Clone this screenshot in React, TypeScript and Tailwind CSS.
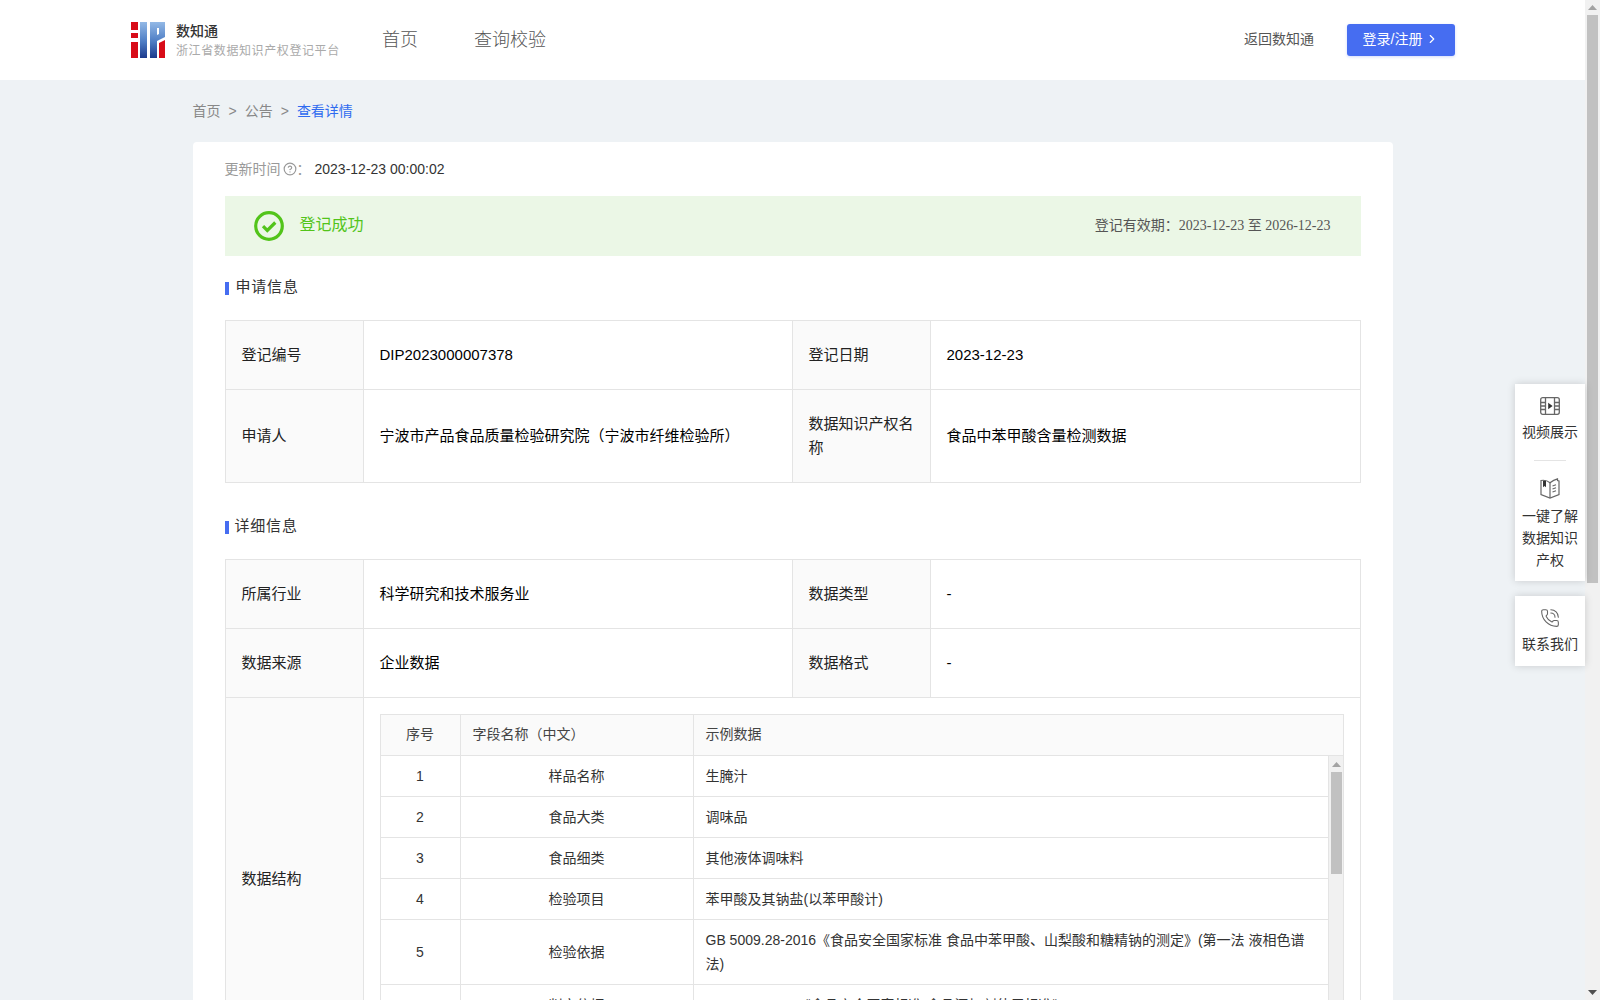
import { ChevronRight, CircleHelp, PhoneCall } from "lucide-react";

const fields = [
  { no: 1, name: "样品名称", sample: "生腌汁" },
  { no: 2, name: "食品大类", sample: "调味品" },
  { no: 3, name: "食品细类", sample: "其他液体调味料" },
  { no: 4, name: "检验项目", sample: "苯甲酸及其钠盐(以苯甲酸计)" },
  {
    no: 5,
    name: "检验依据",
    sample: "GB 5009.28-2016《食品安全国家标准 食品中苯甲酸、山梨酸和糖精钠的测定》(第一法 液相色谱法)",
  },
  { no: 6, name: "判定依据", sample: "GB 2760-2014《食品安全国家标准 食品添加剂使用标准》" },
  { no: 7, name: "计量单位", sample: "g/kg" },
];

const labelCell = "border border-[#e4e4e4] bg-[#fafafa] px-4 py-[22px] text-left align-middle text-[15px] font-normal text-[#222]";
const valueCell = "border border-[#e4e4e4] px-4 py-[22px] align-middle text-[15px] text-black";
const headCell = "border border-[#e4e4e4] bg-[#fafafa] px-3 pt-[7px] pb-[9px] text-left font-normal text-[#444]";
const bodyCell = "border border-[#e4e4e4] px-3 py-2 align-middle text-[#333]";

const Logo = () => (
  <svg width="34" height="36" viewBox="0 0 34 36">
    <defs>
      <linearGradient id="logoBlue" x1="0" y1="0" x2="0" y2="1">
        <stop offset="0" stopColor="#93b9e6" />
        <stop offset="0.55" stopColor="#4d7cc4" />
        <stop offset="1" stopColor="#1c3a8c" />
      </linearGradient>
    </defs>
    <path d="M0 0h7v8H0zM0 11h7v5H0zM0 20h7v16H0z" fill="#d80c18" />
    <path d="M9 0h7v36H9z" fill="url(#logoBlue)" />
    <path fillRule="evenodd" d="M19 0h15v15l-8 4v17h-7zM26 6v7l2-1V6z" fill="url(#logoBlue)" />
    <path d="M28 21l6-3v18h-6z" fill="#d80c18" />
  </svg>
);

const FilmIcon = () => (
  <svg width="20" height="18" viewBox="0 0 20 18" fill="none" stroke="#666" strokeWidth="1.3">
    <rect x="0.7" y="0.7" width="18.6" height="16.6" rx="2" />
    <path d="M5.5 1v16M14.5 1v16M1 5.5h4.5M1 9h4.5M1 12.5h4.5M14.5 5.5H19M14.5 9H19M14.5 12.5H19" />
    <path d="M8.2 5.8l4.4 3.2-4.4 3.2z" fill="#333" stroke="none" />
  </svg>
);

const BookIcon = () => (
  <svg width="20" height="21" viewBox="0 0 20 21" fill="none" stroke="#666" strokeWidth="1.2">
    <path d="M1 2.5c3-.6 6.300 0 9 2.300 2.400-2 4.800-3.300 7.500-4v1.800L19 3v13.500L10 20 1 16.500z" />
    <path d="M10 4.800V20M12.500 8l3.500-1.200M12.500 11l3.500-1.200M12.500 14l3.500-1.200" />
    <path d="M3 2.800h3v6.500L4.500 8 3 9.300z" fill="#333" stroke="none" />
  </svg>
);

const SectionTitle = ({ title, gap }: { title: string; gap: string }) => (
  <div className={`mb-5 flex h-6 items-center ${gap}`}>
    <span className="h-[13px] w-1 bg-[#466df1]" />
    <span className="pb-[2px] text-[15px] tracking-[0.8px] text-[#333]">{title}</span>
  </div>
);

export default function App() {
  return (
    <div
      className="flex h-screen overflow-hidden bg-[#eef2f5] text-sm text-[#333]"
      style={{ fontFamily: '"Liberation Sans", "Noto Sans CJK SC", sans-serif' }}
    >
      <div className="relative min-w-0 flex-1">
        <header className="flex h-20 items-center bg-white pl-[131px] pr-[130px]">
          <Logo />
          <div className="ml-[11px] w-[206px]">
            <div className="text-sm leading-[18px] font-medium text-[#333]">数知通</div>
            <div className="mt-[3px] text-xs leading-[16px] tracking-[0.6px] text-[#aaa]">
              浙江省数据知识产权登记平台
            </div>
          </div>
          <nav className="flex gap-[56px] text-lg font-light text-[#555]">
            <a>首页</a>
            <a>查询校验</a>
          </nav>
          <a className="ml-auto pb-[2px] text-sm text-[#555]">返回数知通</a>
          <button className="ml-[33px] flex h-8 w-[108px] items-center justify-center gap-[3px] rounded-[3px] bg-[#466df1] pb-[2px] text-sm text-white shadow-[0_1px_3px_rgba(70,109,241,.25)]">
            登录/注册
            <ChevronRight size={14} />
          </button>
        </header>

        <main className="mx-auto w-[1200px]">
          <div className="flex h-[62px] items-center gap-2 pb-[1px] text-sm text-[#888]">
            <span>首页</span>
            <span>&gt;</span>
            <span>公告</span>
            <span>&gt;</span>
            <span className="text-[#2f6bf0]">查看详情</span>
          </div>

          <div className="rounded-t bg-white px-8 pt-[15px]">
            <div className="mb-[15px] flex h-6 items-center text-sm">
              <span className="text-[#999]">更新时间</span>
              <CircleHelp size={14} className="ml-[2px] text-[#999]" />
              <span className="w-[18px] text-[#999]">：</span>
              <span className="text-[#333]">2023-12-23 00:00:02</span>
            </div>

            <div className="flex h-[60px] items-center bg-[#ebf7e6] pl-[29px] pr-[30px]">
              <svg width="30" height="30" viewBox="0 0 30 30" fill="none" stroke="#52c41a">
                <circle cx="15" cy="15" r="13.300" strokeWidth="3.200" />
                <path d="M9 15.200l4.300 4.300 8-8" strokeWidth="3.200" />
              </svg>
              <span className="ml-4 pb-[2px] text-base text-[#52c41a]">登记成功</span>
              <span className="ml-auto pb-[2px] text-sm text-[#555]">
                登记有效期：
                <span style={{ fontFamily: '"Liberation Serif", "Noto Sans CJK SC", serif' }}>
                  2023-12-23 至 2026-12-23
                </span>
              </span>
            </div>

            <div className="mt-5">
              <SectionTitle title="申请信息" gap="gap-[7px]" />
            </div>
            <table className="w-full table-fixed border-collapse leading-6">
              <colgroup>
                <col className="w-[138px]" />
                <col className="w-[429px]" />
                <col className="w-[138px]" />
                <col />
              </colgroup>
              <tbody>
                <tr>
                  <th className={labelCell}>登记编号</th>
                  <td className={valueCell}>DIP2023000007378</td>
                  <th className={labelCell}>登记日期</th>
                  <td className={valueCell}>2023-12-23</td>
                </tr>
                <tr>
                  <th className={labelCell}>申请人</th>
                  <td className={valueCell}>宁波市产品食品质量检验研究院（宁波市纤维检验所）</td>
                  <th className={labelCell}>数据知识产权名称</th>
                  <td className={valueCell}>食品中苯甲酸含量检测数据</td>
                </tr>
              </tbody>
            </table>

            <div className="mt-8">
              <SectionTitle title="详细信息" gap="gap-[6px]" />
            </div>
            <table className="w-full table-fixed border-collapse leading-6">
              <colgroup>
                <col className="w-[138px]" />
                <col className="w-[429px]" />
                <col className="w-[138px]" />
                <col />
              </colgroup>
              <tbody>
                <tr>
                  <th className={labelCell}>所属行业</th>
                  <td className={valueCell}>科学研究和技术服务业</td>
                  <th className={labelCell}>数据类型</th>
                  <td className={valueCell}>-</td>
                </tr>
                <tr>
                  <th className={labelCell}>数据来源</th>
                  <td className={valueCell}>企业数据</td>
                  <th className={labelCell}>数据格式</th>
                  <td className={valueCell}>-</td>
                </tr>
                <tr>
                  <th className={labelCell}>数据结构</th>
                  <td colSpan={3} className="border border-[#e4e4e4] p-4 text-sm leading-6">
                    <table className="w-full table-fixed border-collapse">
                      <colgroup>
                        <col className="w-[80px]" />
                        <col className="w-[233px]" />
                        <col />
                      </colgroup>
                      <thead>
                        <tr>
                          <th className={`${headCell} text-center!`}>序号</th>
                          <th className={headCell}>字段名称（中文）</th>
                          <th className={headCell}>示例数据</th>
                        </tr>
                      </thead>
                    </table>
                    <div className="-mt-px flex h-[288px] overflow-hidden">
                      <table className="h-fit min-w-0 flex-1 table-fixed border-collapse">
                        <colgroup>
                          <col className="w-[80px]" />
                          <col className="w-[233px]" />
                          <col />
                        </colgroup>
                        <tbody>
                          {fields.map((f) => (
                            <tr key={f.no}>
                              <td className={`${bodyCell} text-center`}>{f.no}</td>
                              <td className={`${bodyCell} text-center`}>{f.name}</td>
                              <td className={bodyCell}>{f.sample}</td>
                            </tr>
                          ))}
                        </tbody>
                      </table>
                      <div className="relative w-[15px] shrink-0 border-r border-t border-[#e4e4e4] bg-[#f1f1f1]">
                        <svg width="9" height="5" viewBox="0 0 9 5" className="absolute left-[3px] top-[6px]">
                          <path d="M4.500 0L9 5H0z" fill="#a3a3a3" />
                        </svg>
                        <div className="absolute left-[2px] top-4 h-[102px] w-[11px] bg-[#c1c1c1]" />
                      </div>
                    </div>
                  </td>
                </tr>
              </tbody>
            </table>
          </div>
        </main>

        <aside className="absolute right-0 top-[384px] flex w-[70px] flex-col gap-[15px] text-center text-sm text-[#333]">
          <div className="bg-white pb-[10px] pt-[13px] leading-[22px] shadow-[0_0_8px_rgba(0,0,0,.16)]">
            <div className="flex justify-center">
              <FilmIcon />
            </div>
            <div className="mt-[6px]">视频展示</div>
            <div className="mx-auto mb-[17px] mt-[17px] h-px w-8 bg-[#e4e4e4]" />
            <div className="flex justify-center">
              <BookIcon />
            </div>
            <div className="mt-[6px]">
              一键了解
              <br />
              数据知识
              <br />
              产权
            </div>
          </div>
          <div className="bg-white pb-[11px] pt-3 leading-[22px] shadow-[0_0_8px_rgba(0,0,0,.16)]">
            <div className="flex justify-center">
              <PhoneCall size={20} strokeWidth={1.3} className="text-[#666]" />
            </div>
            <div className="mt-[5px]">联系我们</div>
          </div>
        </aside>
      </div>

      <div className="flex w-[15px] shrink-0 flex-col bg-[#f1f1f1]">
        <div className="flex h-[15px] items-center justify-center">
          <svg width="9" height="5" viewBox="0 0 9 5">
            <path d="M4.500 0L9 5H0z" fill="#a3a3a3" />
          </svg>
        </div>
        <div className="mx-auto h-[568px] w-[11px] bg-[#c1c1c1]" />
        <div className="mt-auto flex h-[15px] items-center justify-center">
          <svg width="9" height="5" viewBox="0 0 9 5">
            <path d="M0 0h9L4.500 5z" fill="#505050" />
          </svg>
        </div>
      </div>
    </div>
  );
}
